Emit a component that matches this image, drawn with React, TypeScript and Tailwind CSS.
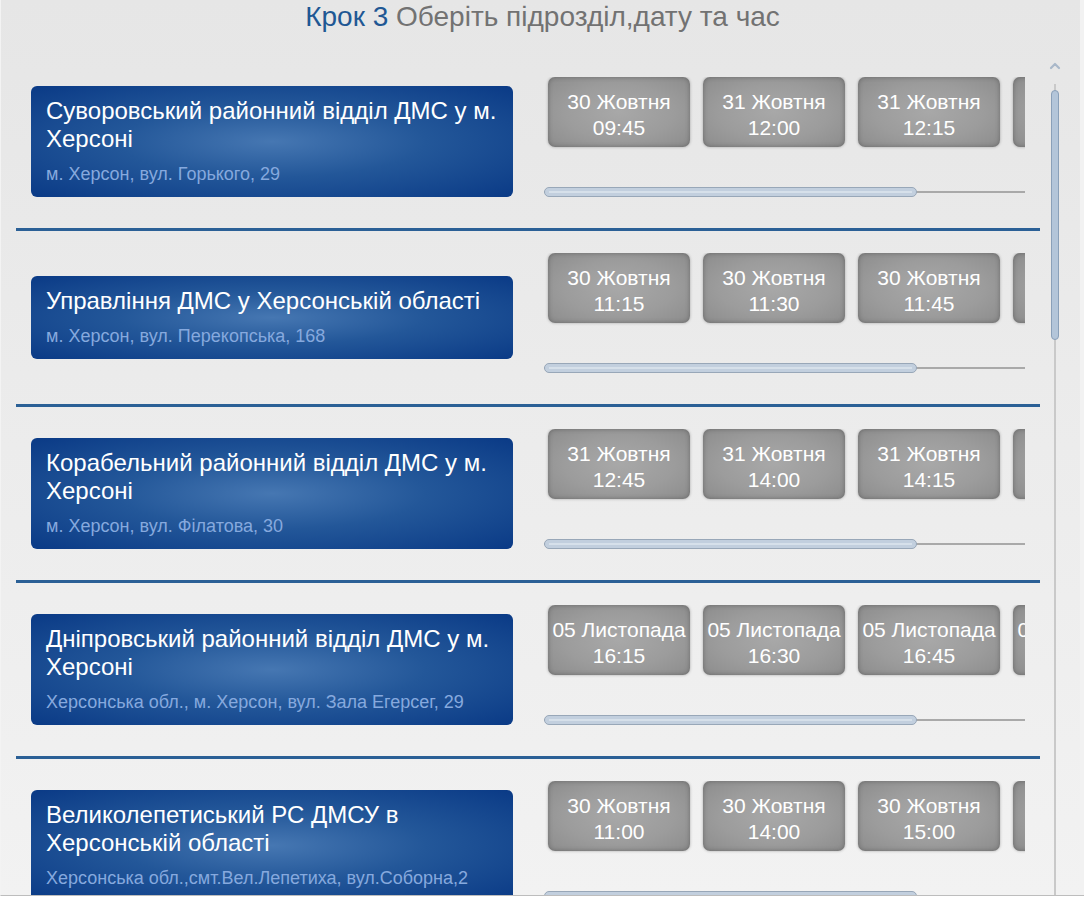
import React from "react";

type Row = {
  title: string;
  address: string;
  slots: [string, string][];
};

const rows: Row[] = [
  {
    title: "Суворовський районний відділ ДМС у м. Херсоні",
    address: "м. Херсон, вул. Горького, 29",
    slots: [
      ["30 Жовтня", "09:45"],
      ["31 Жовтня", "12:00"],
      ["31 Жовтня", "12:15"],
      ["31 Жовтня", "12:30"],
    ],
  },
  {
    title: "Управління ДМС у Херсонській області",
    address: "м. Херсон, вул. Перекопська, 168",
    slots: [
      ["30 Жовтня", "11:15"],
      ["30 Жовтня", "11:30"],
      ["30 Жовтня", "11:45"],
      ["30 Жовтня", "12:00"],
    ],
  },
  {
    title: "Корабельний районний відділ ДМС у м. Херсоні",
    address: "м. Херсон, вул. Філатова, 30",
    slots: [
      ["31 Жовтня", "12:45"],
      ["31 Жовтня", "14:00"],
      ["31 Жовтня", "14:15"],
      ["31 Жовтня", "14:30"],
    ],
  },
  {
    title: "Дніпровський районний відділ ДМС у м. Херсоні",
    address: "Херсонська обл., м. Херсон, вул. Зала Егерсег, 29",
    slots: [
      ["05 Листопада", "16:15"],
      ["05 Листопада", "16:30"],
      ["05 Листопада", "16:45"],
      ["05 Листопада", "17:00"],
    ],
  },
  {
    title: "Великолепетиський РС ДМСУ в Херсонській області",
    address: "Херсонська обл.,смт.Вел.Лепетиха, вул.Соборна,2",
    slots: [
      ["30 Жовтня", "11:00"],
      ["30 Жовтня", "14:00"],
      ["30 Жовтня", "15:00"],
      ["30 Жовтня", "16:00"],
    ],
  },
];

function Slot({ date, time }: { date: string; time: string }) {
  return (
    <div className="shrink-0 w-[142px] h-[70px] rounded-[7px] pt-[12px] text-center text-white text-[21px] leading-[26px] whitespace-nowrap bg-[radial-gradient(ellipse_at_center,#a8a8a8_0%,#9c9c9c_55%,#8c8c8c_100%)] shadow-[inset_0_0_5px_rgba(0,0,0,0.28),0_0_3px_rgba(0,0,0,0.3)]">
      <div>{date}</div>
      <div>{time}</div>
    </div>
  );
}

function RowItem({ row }: { row: Row }) {
  return (
    <div className="flex h-[176px] shrink-0 border-b-[3px] border-[#2b6096]">
      <div className="w-[528px] shrink-0 pl-[15px] flex items-center h-[173px]">
        <div className="w-[482px] rounded-[6px] pt-[11px] pb-[13px] pl-[15px] pr-[8px] bg-[radial-gradient(ellipse_at_center,#4677b2_0%,#235799_45%,#0a3a86_100%)]">
          <div className="text-white text-[24px] leading-[28px]">{row.title}</div>
          <div className="mt-[11px] text-[#86a9de] text-[18px] leading-[20px] whitespace-nowrap">
            {row.address}
          </div>
        </div>
      </div>
      <div className="w-[481px] shrink-0 flex flex-col pt-[22px]">
        <div className="flex gap-[13px] pl-[4px] pb-[4px] overflow-hidden">
          {row.slots.map((s, i) => (
            <Slot key={i} date={s[0]} time={s[1]} />
          ))}
        </div>
        <div className="relative mt-[36px] h-[10px]">
          <div className="absolute left-0 right-0 top-[4px] h-[2px] bg-[#a9a9a9]" />
          <div className="absolute left-0 top-0 w-[373px] h-[10px] rounded-full bg-[#c2cfde] border border-[#98a7b8]">
            <div className="mx-[4px] mt-[3px] h-[2px] bg-[#d6e0ea]" />
          </div>
        </div>
      </div>
    </div>
  );
}

export default function App() {
  return (
    <div
      className="w-[1084px] h-[900px] bg-white overflow-hidden"
      style={{ fontFamily: '"Liberation Sans", Arial, sans-serif' }}
    >
      <div className="relative h-[896px] border-b border-[#bdbdbd] bg-[linear-gradient(to_bottom,#e6e6e6,#f2f2f2)] border-l border-l-[#f3f3f3] overflow-hidden">
        <div className="h-[55px] text-center text-[28px] leading-[34px]">
          <span className="text-[#1f5894]">Крок 3</span>{" "}
          <span className="text-[#727272]">Оберіть підрозділ,дату та час</span>
        </div>
        <div className="ml-[15px] w-[1024px] flex flex-col">
          {rows.map((r, i) => (
            <RowItem key={i} row={r} />
          ))}
        </div>
        {/* vertical scrollbar */}
        <div className="absolute left-[1046px] top-[62px] w-[16px] h-[20px] flex justify-center">
          <svg width="12" height="8" viewBox="0 0 12 8">
            <path d="M2 6 L6 2 L10 6" fill="none" stroke="#a9b8c9" strokeWidth="2.2" strokeLinecap="round" strokeLinejoin="round" />
          </svg>
        </div>
        <div className="absolute left-[1053px] top-[84px] bottom-0 w-[2px] bg-[#c9c9c9]" />
        <div className="absolute left-[1050px] top-[90px] w-[8px] h-[250px] rounded-full bg-[#b3c5d9] border border-[#8aa0b9]" />
        <div className="absolute right-0 top-0 bottom-0 w-[4px] bg-[#f2f2f2]" />
      </div>
    </div>
  );
}
